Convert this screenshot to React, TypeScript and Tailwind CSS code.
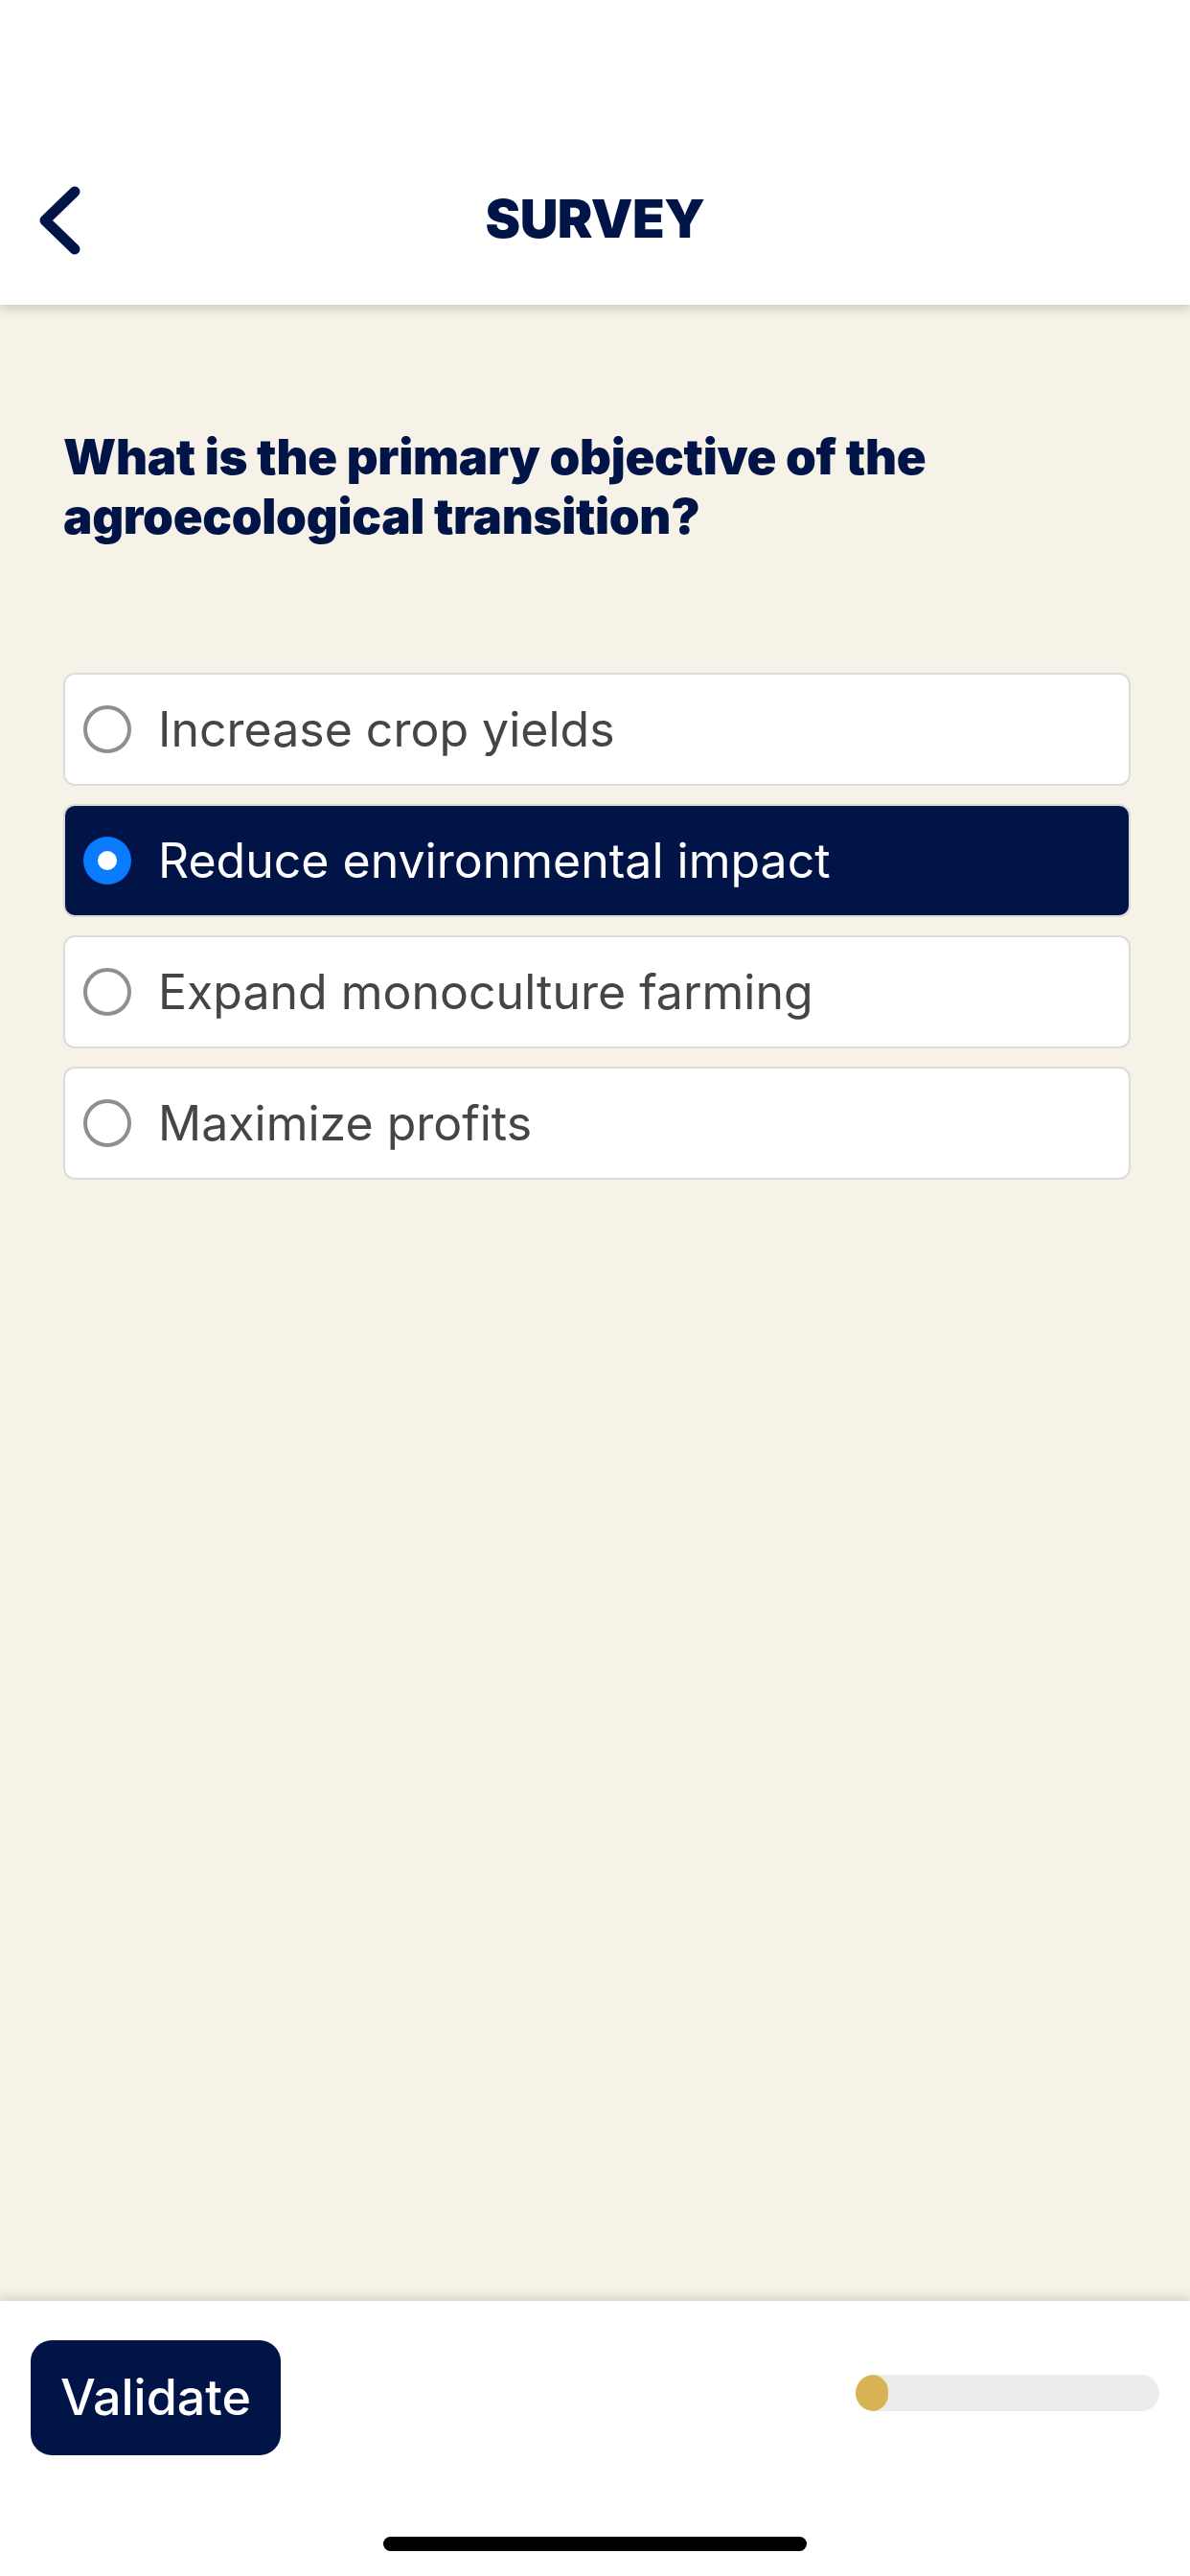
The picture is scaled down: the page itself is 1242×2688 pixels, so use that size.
const options = [
  "Increase crop yields",
  "Reduce environmental impact",
  "Expand monoculture farming",
  "Maximize profits",
];

function Radio({ checked }: { checked: boolean }) {
  if (checked) {
    return (
      <span className="flex h-[50px] w-[50px] shrink-0 items-center justify-center rounded-full bg-[#0a7aff]">
        <span className="h-[20px] w-[20px] rounded-full bg-white" />
      </span>
    );
  }
  return <span className="h-[50px] w-[50px] shrink-0 rounded-full border-[4px] border-[#8e8e93] bg-white" />;
}

export default function App() {
  const selected = 1;

  return (
    <div className="flex h-[2688px] w-[1242px] flex-col bg-[#f6f2e7] font-['Inter',sans-serif]">
      <header className="relative z-10 bg-white pt-[188px] pb-[50px] shadow-[0_4px_10px_rgba(90,80,60,0.25)]">
        <div className="relative flex h-[80px] items-center justify-center">
          <svg
            className="absolute left-[38px] top-[5px]"
            width="48"
            height="74"
            viewBox="0 0 48 74"
            fill="none"
            stroke="#011448"
            strokeWidth="11"
            strokeLinecap="round"
            strokeLinejoin="round"
          >
            <polyline points="40,7 9,37 40,67" />
          </svg>
          <h1 className="text-[55px] font-black leading-none tracking-[-0.5px] text-[#011448]">SURVEY</h1>
        </div>
      </header>

      <main className="flex flex-1 flex-col pl-[66px] pr-[62px] pt-[128px]">
        <h2 className="text-[51px] font-black leading-[62px] tracking-[-0.3px] text-[#011448]">
          What is the primary objective of the agroecological transition?
        </h2>

        <div className="mt-[132px] flex flex-col gap-[19px]">
          {options.map((label, i) => {
            const active = i === selected;
            return (
              <div
                key={label}
                className={`flex h-[118px] items-center gap-[28px] rounded-[12px] border-2 pl-[19px] ${
                  active ? "border-[#d9d9d9] bg-[#011448] text-white" : "border-[#dcdcdc] bg-white text-[#454545]"
                }`}
              >
                <Radio checked={active} />
                <span className="text-[50px] leading-none">{label}</span>
              </div>
            );
          })}
        </div>
      </main>

      <footer className="relative z-10 flex h-[287px] flex-col bg-white shadow-[0_-4px_10px_rgba(90,80,60,0.2)]">
        <div className="flex items-center justify-between px-[32px] pt-[41px]">
          <button className="flex h-[120px] w-[261px] items-center justify-center rounded-[22px] bg-[#011448] text-[52px] font-medium text-white">
            Validate
          </button>
          <div className="mb-[10px] h-[38px] w-[317px] overflow-hidden rounded-full bg-[#ececec]">
            <div className="h-full w-[34px] rounded-full bg-[#d8b456]" />
          </div>
        </div>
        <div className="mt-auto mb-[26px] flex justify-center">
          <div className="h-[15px] w-[442px] rounded-full bg-black" />
        </div>
      </footer>
    </div>
  );
}
